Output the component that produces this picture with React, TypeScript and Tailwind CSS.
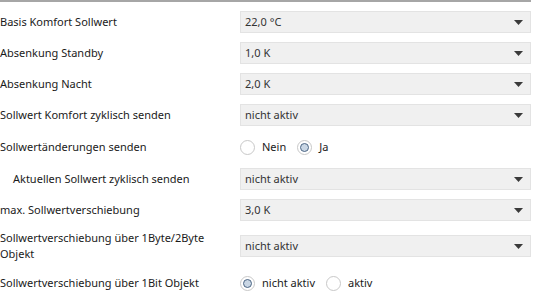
import { ReactNode } from "react";

function Dropdown({ value }: { value: string }) {
  return (
    <div className="flex h-[22px] w-[291px] items-center justify-between border border-[#e3e3e3] bg-[#f0f0f0] pl-[4px] pr-[6px] text-[#333333]">
      <span>{value}</span>
      <svg width="9" height="5" viewBox="0 0 9 5" className="mr-[1px]">
        <path d="M0 0 L9 0 L4.5 5 Z" fill="#3a3a3a" />
      </svg>
    </div>
  );
}

function Radio({ label, checked }: { label: string; checked?: boolean }) {
  return (
    <div className="flex items-center gap-[7px]">
      <span className="flex h-[15px] w-[15px] items-center justify-center rounded-full border border-[#c8c8c8] bg-white">
        {checked ? (
          <span className="h-[9px] w-[9px] rounded-full border-[1.5px] border-[#4c6684] bg-[#c9d6e4]" />
        ) : null}
      </span>
      <span className="text-[#1a1a1a]">{label}</span>
    </div>
  );
}

function Row({
  label,
  indent,
  children,
}: {
  label: ReactNode;
  indent?: boolean;
  children: ReactNode;
}) {
  return (
    <div className="grid grid-cols-[240px_291px] items-center">
      <div className={`leading-[16px] text-[#1a1a1a] ${indent ? "pl-[13px]" : ""}`}>
        {label}
      </div>
      <div className="flex min-h-[22px] items-center">{children}</div>
    </div>
  );
}

export default function App() {
  return (
    <main
      className="min-h-screen bg-white text-[11px]"
      style={{ fontFamily: '"Noto Sans", "Open Sans", sans-serif' }}
    >
      <section className="flex w-[531px] flex-col gap-[9px] border-t-2 border-[#a6a6a6] pt-[9px]">
        <Row label="Basis Komfort Sollwert">
          <Dropdown value="22,0 °C" />
        </Row>
        <Row label="Absenkung Standby">
          <Dropdown value="1,0 K" />
        </Row>
        <Row label="Absenkung Nacht">
          <Dropdown value="2,0 K" />
        </Row>
        <Row label="Sollwert Komfort zyklisch senden">
          <Dropdown value="nicht aktiv" />
        </Row>
        <Row label="Sollwertänderungen senden">
          <div className="flex h-[24px] items-center gap-[11px]">
            <Radio label="Nein" />
            <Radio label="Ja" checked />
          </div>
        </Row>
        <Row label="Aktuellen Sollwert zyklisch senden" indent>
          <Dropdown value="nicht aktiv" />
        </Row>
        <Row label="max. Sollwertverschiebung">
          <Dropdown value="3,0 K" />
        </Row>
        <Row
          label={
            <>
              Sollwertverschiebung über 1Byte/2Byte
              <br />
              Objekt
            </>
          }
        >
          <Dropdown value="nicht aktiv" />
        </Row>
        <Row label="Sollwertverschiebung über 1Bit Objekt">
          <div className="flex h-[24px] items-center gap-[11px]">
            <Radio label="nicht aktiv" checked />
            <Radio label="aktiv" />
          </div>
        </Row>
      </section>
    </main>
  );
}
